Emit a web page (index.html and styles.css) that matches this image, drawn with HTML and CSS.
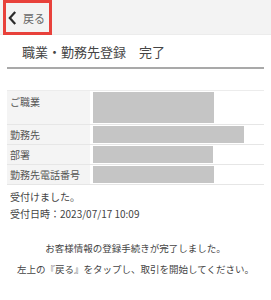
FILE: index.html
```html
<!DOCTYPE html>
<html lang="ja">
<head>
<meta charset="utf-8">
<link rel="stylesheet" href="styles.css">
</head>
<body>
<header class="topbar">
  <a class="back">
    <svg class="chev" width="9" height="14" viewBox="0 0 9 14"><path d="M7.2 1 L1.8 7 L7.2 13" fill="none" stroke="#2b2b2b" stroke-width="2.2"/></svg>
    <span>戻る</span>
  </a>
</header>
<main class="content">
  <h1 class="title">職業・勤務先登録　完了</h1>
  <div class="table">
    <div class="row tall">
      <div class="label">ご職業</div>
      <div class="value"><div class="mask w121"></div></div>
    </div>
    <div class="row">
      <div class="label">勤務先</div>
      <div class="value"><div class="mask w151"></div></div>
    </div>
    <div class="row">
      <div class="label">部署</div>
      <div class="value"><div class="mask w120"></div></div>
    </div>
    <div class="row">
      <div class="label">勤務先電話番号</div>
      <div class="value"><div class="mask w121"></div></div>
    </div>
  </div>
  <p class="receipt">受付けました。<br>受付日時：2023/07/17 10:09</p>
  <p class="msg first">お客様情報の登録手続きが完了しました。</p>
  <p class="msg">左上の『戻る』をタップし、取引を開始してください。</p>
</main>
</body>
</html>
```
FILE: styles.css
```css
* { box-sizing: border-box; }
html, body { margin: 0; padding: 0; background: #fff; }
body {
  font-family: "Noto Sans CJK JP", "Noto Sans", sans-serif;
  color: #333;
  width: 271px;
}
.topbar {
  height: 35px;
  background: #f3f3f3;
  border-bottom: 1px solid #ececec;
  position: relative;
}
.back {
  position: absolute;
  left: 3px;
  top: 0;
  width: 49px;
  height: 35px;
  border: 3px solid #e8413b;
  display: flex;
  align-items: center;
  padding-left: 2px;
  gap: 6px;
  font-size: 11px;
  color: #666;
}
.chev { display: block; }
.content { padding: 0 7px; }
.title {
  margin: 0;
  height: 34px;
  padding: 9px 0 0 15px;
  font-size: 13px;
  font-weight: normal;
  line-height: 16px;
  color: #444;
  border-bottom: 2px solid #a9a9a9;
}
.table {
  margin-top: 21px;
  border-top: 1px solid #ececec;
}
.row {
  display: grid;
  grid-template-columns: 83px 1fr;
  column-gap: 2px;
  height: 20px;
  border-bottom: 1px solid #e6e6e6;
}
.row.tall { height: 34px; }
.label {
  background: #f4f4f4;
  font-size: 10px;
  line-height: 19px;
  padding-left: 3px;
  color: #555;
}
.row.tall .label { padding-top: 1px; }
.value { padding: 1px 0 1px 1px; }
.mask { height: 100%; background: #c5c5c5; }
.w121 { width: 121px; }
.w151 { width: 151px; }
.w120 { width: 120px; }
.receipt {
  margin: 3px 0 0 3px;
  font-size: 10px;
  line-height: 17px;
  color: #444;
}
.msg {
  margin: 0;
  text-align: center;
  font-size: 9.5px;
  line-height: 21px;
  color: #444;
}
.msg.first { margin-top: 16px; }
```
